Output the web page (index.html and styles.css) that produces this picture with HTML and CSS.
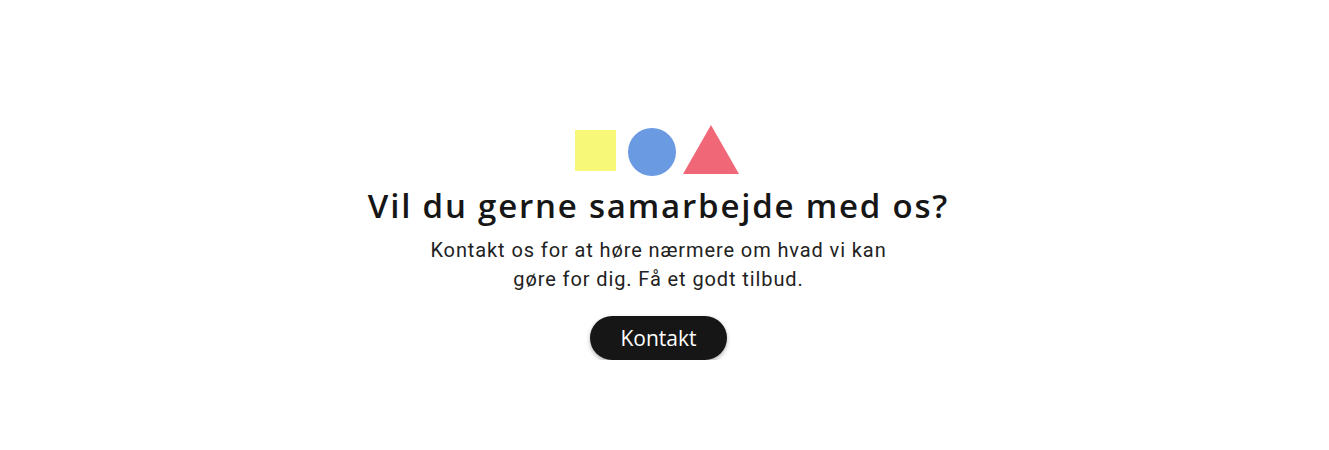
FILE: index.html
```html
<!DOCTYPE html>
<html lang="da">
<head>
<meta charset="utf-8">
<title>Kontakt</title>
<link rel="stylesheet" href="styles.css">
</head>
<body>
<main class="page">
  <section class="cta">
    <div class="shapes">
      <svg class="shape-square" width="41" height="41" viewBox="0 0 41 41"><rect width="41" height="41" fill="#f8f878"/></svg>
      <svg class="shape-circle" width="48" height="48" viewBox="0 0 48 48"><circle cx="24" cy="24" r="24" fill="#6a9ae2"/></svg>
      <svg class="shape-triangle" width="56" height="49" viewBox="0 0 56 49"><polygon points="28,0 56,49 0,49" fill="#f06878"/></svg>
    </div>
    <h2 class="cta-title">Vil du gerne samarbejde med os?</h2>
    <p class="cta-text">Kontakt os for at høre nærmere om hvad vi kan gøre for dig. Få et godt tilbud.</p>
    <a class="cta-button" href="#">Kontakt</a>
  </section>
</main>
</body>
</html>
```
FILE: styles.css
```css
html, body {
  margin: 0;
  padding: 0;
  background: #ffffff;
}

.page {
  padding: 125px 12px 0 0;
  display: flex;
  justify-content: center;
}

.cta {
  display: flex;
  flex-direction: column;
  align-items: center;
  text-align: center;
}

.shapes {
  display: flex;
  align-items: flex-start;
  margin-right: 4px;
}

.shapes svg {
  display: block;
}

.shape-square {
  margin-top: 5px;
}

.shape-circle {
  margin: 3px 7px 0 12px;
}

.cta-title {
  margin: 8px 0 0;
  font-family: "Open Sans", "Lato", sans-serif;
  font-weight: 600;
  font-size: 33px;
  letter-spacing: 1.8px;
  line-height: 44px;
  color: #161616;
}

.cta-text {
  margin: 8px 0 0;
  width: 470px;
  font-family: Roboto, "Liberation Sans", sans-serif;
  font-size: 20px;
  letter-spacing: 0.9px;
  line-height: 29px;
  color: #222222;
}

.cta-button {
  margin-top: 22px;
  display: inline-flex;
  align-items: center;
  justify-content: center;
  width: 137px;
  height: 44px;
  border-radius: 22px;
  background: #161616;
  color: #ffffff;
  text-decoration: none;
  font-family: "Open Sans", "Lato", sans-serif;
  font-size: 21px;
  box-shadow: 0 2px 4px rgba(0, 0, 0, 0.3);
}
```
